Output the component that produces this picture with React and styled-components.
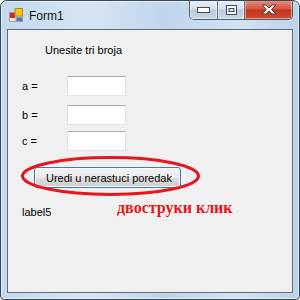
import React from 'react';
import styled, { createGlobalStyle } from 'styled-components';

const GlobalStyle = createGlobalStyle`
  html, body {
    margin: 0;
    padding: 0;
    background: #ffffff;
  }
`;

const Window = styled.div`
  box-sizing: border-box;
  width: 300px;
  height: 300px;
  display: flex;
  flex-direction: column;
  border: 1px solid #3b4757;
  border-radius: 7px 7px 4px 4px;
  background: linear-gradient(90deg, #c3d8ee 0%, #d6e5f5 30%, #bfd5ec 55%, #d2e3f4 80%, #bcd3eb 100%);
  box-shadow: inset 0 0 0 1px rgba(255, 255, 255, 0.55);
  overflow: hidden;
`;

const TitleBar = styled.div`
  height: 28px;
  display: flex;
  align-items: flex-start;
  flex-shrink: 0;
`;

const AppIcon = styled.svg`
  width: 14px;
  height: 14px;
  margin: 7px 0 0 8px;
`;

const Title = styled.span`
  margin: 7px 0 0 6px;
  font-family: 'Liberation Sans', Arial, sans-serif;
  font-size: 12px;
  line-height: 16px;
  color: #111111;
`;

const CaptionGroup = styled.div`
  margin: -1px 6px 0 auto;
  display: flex;
  height: 19px;
  border: 1px solid #4f5d6d;
  border-top: none;
  border-radius: 0 0 5px 5px;
  overflow: hidden;
`;

const CaptionButton = styled.div`
  width: ${p => p.$w}px;
  height: 19px;
  display: flex;
  align-items: center;
  justify-content: center;
  background: ${p =>
    p.$close
      ? 'linear-gradient(180deg, #e79584 0%, #d8553f 45%, #c2351d 55%, #d24d33 100%)'
      : 'linear-gradient(180deg, #eaf1f8 0%, #d5e1ed 45%, #bccbdc 55%, #c9d7e6 100%)'};
  border-left: ${p => (p.$first ? 'none' : '1px solid #5f6d7d')};
  box-shadow: inset 0 0 0 1px rgba(255, 255, 255, 0.45);
`;

const Client = styled.div`
  flex: 1;
  margin: 0 6px 6px 6px;
  border: 1px solid #5d6b7d;
  background: #f0f0f0;
  display: flex;
  flex-direction: column;
  font-family: 'Liberation Sans', Arial, sans-serif;
  font-size: 11px;
  color: #000000;
`;

const Heading = styled.div`
  margin: 14px 0 0 37px;
  line-height: 13px;
`;

const Row = styled.div`
  display: flex;
  align-items: center;
  margin: ${p => p.$top}px 0 0 14px;
`;

const FieldLabel = styled.span`
  width: 45px;
  line-height: 13px;
`;

const TextBox = styled.div`
  box-sizing: border-box;
  width: 59px;
  height: 20px;
  background: #ffffff;
  border: 1px solid #e2e3ea;
  border-top-color: #abadb3;
`;

const ButtonArea = styled.div`
  position: relative;
  align-self: flex-start;
  margin: 16px 0 0 26px;
`;

const PushButton = styled.button`
  box-sizing: border-box;
  width: 147px;
  height: 21px;
  padding: 0 0 0 11px;
  text-align: left;
  font-family: 'Liberation Sans', Arial, sans-serif;
  font-size: 11px;
  color: #000000;
  border: 1px solid #3c7fb1;
  border-radius: 3px;
  background: linear-gradient(180deg, #f3f3f3 0%, #ebebeb 50%, #dddddd 51%, #cfcfcf 100%);
  box-shadow: inset 0 0 0 1px #f7fbfe;
`;

const Ellipse = styled.svg`
  position: absolute;
  left: -13px;
  top: -11px;
  width: 179px;
  height: 40px;
  overflow: visible;
  pointer-events: none;
`;

const BottomRow = styled.div`
  display: flex;
  align-items: flex-start;
  margin: 18px 0 0 14px;
`;

const PlainLabel = styled.span`
  width: 95px;
  line-height: 13px;
`;

const Note = styled.span`
  margin-top: -7px;
  font-family: 'Liberation Serif', 'Times New Roman', serif;
  font-weight: bold;
  font-size: 16px;
  line-height: 18px;
  color: #e8141e;
`;

export default function App() {
  return (
    <>
      <GlobalStyle />
      <Window>
        <TitleBar>
          <AppIcon viewBox="0 0 14 14">
            <rect x="0.5" y="4.5" width="13" height="9" fill="#e8e8e8" stroke="#a0a0a0" />
            <line x1="0.5" y1="9" x2="13.5" y2="9" stroke="#a0a0a0" />
            <line x1="7" y1="4.5" x2="7" y2="13.5" stroke="#a0a0a0" />
            <rect x="1" y="5" width="5" height="5" fill="#d8261c" />
            <rect x="6" y="0.5" width="7.5" height="7.5" fill="#f5c31c" stroke="#b98a10" />
            <rect x="7.5" y="9.5" width="5.5" height="3.5" fill="#3e78d6" />
          </AppIcon>
          <Title>Form1</Title>
          <CaptionGroup>
            <CaptionButton $w={27} $first>
              <svg width="13" height="6" viewBox="0 0 13 6">
                <rect x="0.5" y="0.5" width="12" height="5" fill="#ffffff" stroke="#3d4a5a" />
              </svg>
            </CaptionButton>
            <CaptionButton $w={26}>
              <svg width="11" height="10" viewBox="0 0 11 10">
                <rect x="0.5" y="0.5" width="10" height="9" fill="#ffffff" stroke="#3d4a5a" />
                <rect x="3" y="3.5" width="5" height="3" fill="#d9e4ef" stroke="#3d4a5a" />
              </svg>
            </CaptionButton>
            <CaptionButton $w={47} $close>
              <svg width="16" height="11" viewBox="0 0 16 11">
                <path
                  d="M1 1 H5 L8 4 L11 1 H15 L10.5 5.5 L15 10 H11 L8 7 L5 10 H1 L5.5 5.5 Z"
                  fill="#ffffff"
                  stroke="#5b3a36"
                  strokeWidth="1"
                  strokeLinejoin="round"
                />
              </svg>
            </CaptionButton>
          </CaptionGroup>
        </TitleBar>
        <Client>
          <Heading>Unesite tri broja</Heading>
          <Row $top={19}>
            <FieldLabel>a =</FieldLabel>
            <TextBox />
          </Row>
          <Row $top={9}>
            <FieldLabel>b =</FieldLabel>
            <TextBox />
          </Row>
          <Row $top={6}>
            <FieldLabel>c =</FieldLabel>
            <TextBox />
          </Row>
          <ButtonArea>
            <PushButton>Uredi u nerastuci poredak</PushButton>
            <Ellipse viewBox="0 0 179 40">
              <ellipse cx="89.5" cy="20" rx="88" ry="18.5" fill="none" stroke="#e8141e" strokeWidth="3" />
            </Ellipse>
          </ButtonArea>
          <BottomRow>
            <PlainLabel>label5</PlainLabel>
            <Note>двоструки клик</Note>
          </BottomRow>
        </Client>
      </Window>
    </>
  );
}
